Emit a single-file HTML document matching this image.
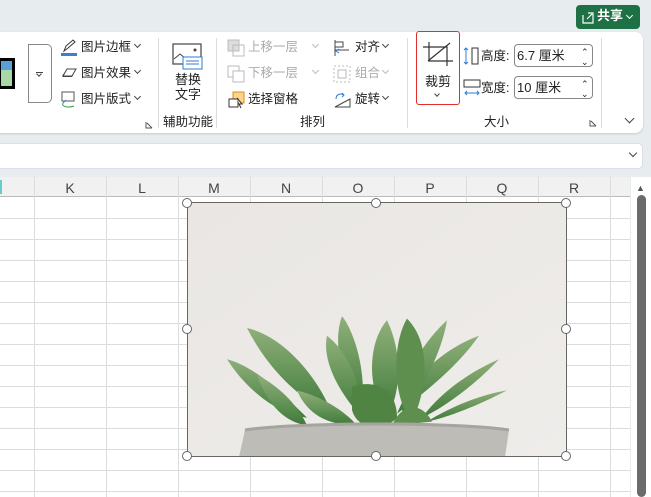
<!DOCTYPE html>
<html><head><meta charset="utf-8"><style>
*{margin:0;padding:0;box-sizing:border-box}
body{width:651px;height:497px;overflow:hidden;background:#e7ecef;font-family:"Liberation Sans","Noto Sans CJK SC",sans-serif;font-size:12.5px;color:#222;position:relative}
.a{position:absolute}
.t{position:absolute;white-space:nowrap;line-height:14px}
.g{color:#aaa}
.sep{position:absolute;width:1px;background:#dcdcdc;top:38px;height:90px}
.chev{position:absolute;width:5px;height:5px;border-right:1.2px solid #444;border-bottom:1.2px solid #444;transform:rotate(45deg)}
.chev.g2{border-color:#bbb}
.col{position:absolute;top:180px;font-size:14px;color:#444;width:20px;text-align:center;margin-left:-10px}
.h{position:absolute;width:10px;height:10px;border:1.6px solid #666;border-radius:50%;background:#fff;margin:-5px 0 0 -5px}
</style></head><body>
<div class="a" style="left:576px;top:5px;width:64px;height:24px;background:#1e7145;border-radius:4px"></div>
<svg class="a" style="left:581px;top:10px" width="14" height="14" viewBox="0 0 14 14"><path d="M2 5v8h10V8M6 9l5-5M7 3h5v5" stroke="#fff" fill="none" stroke-width="1.2"/></svg>
<div class="t" style="left:597px;top:9px;color:#fff;font-size:13px;font-weight:bold">共享</div>
<div class="chev" style="left:627px;top:13px;border-color:#fff"></div>

<div class="a" style="left:-10px;top:32px;width:653px;height:101px;background:#fff;border-radius:8px;box-shadow:0 1px 2px rgba(0,0,0,.15)"></div>
<div class="a" style="left:-2px;top:58px;width:17px;height:31px;border:3px solid #000;background:linear-gradient(#5aa0d8 0,#5aa0d8 35%,#a8d8a8 35%)"></div>
<div class="a" style="left:28px;top:44px;width:24px;height:59px;border:1px solid #888;border-radius:0 5px 5px 0"></div>
<div class="a" style="left:36px;top:72px;width:7px;height:1px;background:#444"></div><div class="chev" style="left:37px;top:72px;width:4px;height:4px"></div>

<svg class="a" style="left:60px;top:39px" width="18" height="18"><rect x="1" y="14" width="16" height="3" fill="#3d7dd8"/><path d="M4 12l2-5 7-6 2 2-7 6z" stroke="#333" fill="none"/></svg>
<div class="t" style="left:81px;top:40px">图片边框</div><div class="chev" style="left:135px;top:42px"></div>
<svg class="a" style="left:60px;top:66px" width="18" height="14"><path d="M2 10l5-7h9l-4 8H3z" fill="#444"/><path d="M7 3h9l-4 7H3z" fill="#fff" stroke="#444"/></svg>
<div class="t" style="left:81px;top:66px">图片效果</div><div class="chev" style="left:135px;top:68px"></div>
<svg class="a" style="left:60px;top:91px" width="18" height="18"><rect x="2" y="1" width="12" height="9" fill="none" stroke="#555"/><path d="M3 12c-2 4 6 5 11 3" stroke="#3a9a4a" fill="none"/><path d="M3 12l3-3" stroke="#3d7dd8"/></svg>
<div class="t" style="left:81px;top:92px">图片版式</div><div class="chev" style="left:135px;top:94px"></div>
<svg class="a" style="left:145px;top:121px" width="8" height="8"><path d="M1 1v6h6M2 2l5 5" stroke="#555" fill="none"/></svg>
<div class="sep" style="left:158px"></div>

<svg class="a" style="left:172px;top:43px" width="32" height="27"><rect x="1" y="1" width="28" height="20" fill="none" stroke="#444" stroke-width="1.2"/><path d="M2 16l6-5 5 4" stroke="#444" fill="none"/><circle cx="23" cy="7" r="1.5" fill="#444"/><rect x="11" y="14" width="19" height="12" fill="#fff" stroke="#2f7bd3"/><path d="M14 18h13M14 21h13" stroke="#2f7bd3"/></svg>
<div class="t" style="left:175px;top:73px;font-size:13px">替换</div>
<div class="t" style="left:175px;top:88px;font-size:13px">文字</div>
<div class="t" style="left:163px;top:115px">辅助功能</div>
<div class="sep" style="left:216px"></div>

<svg class="a" style="left:227px;top:39px" width="18" height="18"><rect x="1" y="1" width="11" height="11" fill="#ddd" stroke="#bbb"/><rect x="6" y="6" width="11" height="11" fill="none" stroke="#bbb"/></svg>
<div class="t g" style="left:248px;top:40px">上移一层</div><div class="chev g2" style="left:313px;top:42px"></div>
<svg class="a" style="left:227px;top:65px" width="18" height="18"><rect x="1" y="1" width="11" height="11" fill="none" stroke="#bbb"/><rect x="6" y="6" width="11" height="11" fill="#fff" stroke="#bbb"/></svg>
<div class="t g" style="left:248px;top:66px">下移一层</div><div class="chev g2" style="left:313px;top:68px"></div>
<svg class="a" style="left:228px;top:91px" width="18" height="18"><rect x="5" y="1" width="11" height="11" fill="#fbd38a" stroke="#e08a1a"/><rect x="1" y="8" width="9" height="8" fill="#fff" stroke="#333"/><path d="M9 7l5 6-3 0 2 4" fill="#fff" stroke="#333"/></svg>
<div class="t" style="left:248px;top:92px">选择窗格</div>
<div class="t" style="left:300px;top:115px">排列</div>

<svg class="a" style="left:333px;top:39px" width="18" height="18"><path d="M2 1v16M2 3h8v5H2M2 11h14" stroke="#444" fill="none"/><path d="M6 14l-3-2 3-2" stroke="#2f7bd3" fill="none"/></svg>
<div class="t" style="left:355px;top:40px">对齐</div><div class="chev" style="left:383px;top:42px"></div>
<svg class="a" style="left:333px;top:65px" width="18" height="18"><rect x="1" y="1" width="16" height="16" fill="none" stroke="#bbb" stroke-dasharray="2 2"/><rect x="5" y="5" width="8" height="8" fill="none" stroke="#bbb"/></svg>
<div class="t g" style="left:355px;top:66px">组合</div><div class="chev g2" style="left:383px;top:68px"></div>
<svg class="a" style="left:333px;top:91px" width="18" height="18"><path d="M2 16h15L17 8z" fill="none" stroke="#444"/><path d="M3 8c0-5 5-6 8-4M9 2l2 2-2 2" stroke="#2f7bd3" fill="none"/></svg>
<div class="t" style="left:355px;top:92px">旋转</div><div class="chev" style="left:383px;top:94px"></div>
<div class="sep" style="left:407px"></div>

<div class="a" style="left:416px;top:31px;width:44px;height:74px;border:1.6px solid #e0302e;border-radius:3px"></div>
<svg class="a" style="left:422px;top:41px" width="32" height="26"><path d="M1 6h24V25M7 1v19h24M6 20L28 2" stroke="#333" fill="none" stroke-width="1.2"/></svg>
<div class="t" style="left:425px;top:75px;font-size:13px">裁剪</div><div class="chev" style="left:435px;top:92px;width:4px;height:4px"></div>

<svg class="a" style="left:463px;top:46px" width="18" height="20"><path d="M3 2v16M1 4l2-2 2 2M1 16l2 2 2-2" stroke="#2f7bd3" fill="none"/><rect x="9" y="2" width="6" height="16" fill="none" stroke="#333"/></svg>
<div class="t" style="left:481px;top:49px">高度:</div>
<div class="a" style="left:514px;top:44px;width:79px;height:23px;border:1px solid #888;border-radius:4px"></div>
<div class="t" style="left:517px;top:49px;font-size:13px;color:#222">6.7 厘米</div>
<div class="t" style="left:581px;top:45px;font-size:9px">&#8963;</div><div class="t" style="left:581px;top:55px;font-size:9px">&#8964;</div>
<svg class="a" style="left:463px;top:78px" width="18" height="20"><rect x="1" y="2" width="16" height="7" fill="none" stroke="#333"/><path d="M2 15h14M4 13l-2 2 2 2M14 13l2 2-2 2" stroke="#2f7bd3" fill="none"/></svg>
<div class="t" style="left:481px;top:81px">宽度:</div>
<div class="a" style="left:514px;top:76px;width:79px;height:23px;border:1px solid #888;border-radius:4px"></div>
<div class="t" style="left:517px;top:81px;font-size:13px;color:#222">10 厘米</div>
<div class="t" style="left:581px;top:77px;font-size:9px">&#8963;</div><div class="t" style="left:581px;top:87px;font-size:9px">&#8964;</div>
<div class="t" style="left:484px;top:115px">大小</div>
<svg class="a" style="left:589px;top:119px" width="8" height="8"><path d="M1 1v6h6M2 2l5 5" stroke="#555" fill="none"/></svg>
<div class="sep" style="left:601px"></div>
<div class="chev" style="left:626px;top:115px;width:7px;height:7px"></div>

<div class="a" style="left:-5px;top:143px;width:648px;height:26px;background:#fff;border-radius:5px;border:1px solid #dde"></div>
<div class="chev" style="left:630px;top:150px;width:6px;height:6px"></div>

<div class="a" style="left:0;top:177px;width:630px;height:320px;background:#fff"></div>
<div class="a" style="left:0;top:177px;width:630px;height:20px;background:#f1f1f1;border-bottom:1px solid #bbb"></div>
<svg class="a" style="left:0;top:177px" width="630" height="320">
<g stroke="#dcdcdc" stroke-width="1">
<path d="M34.5 0V320M106.5 0V320M178.5 0V320M250.5 0V320M322.5 0V320M394.5 0V320M466.5 0V320M538.5 0V320M610.5 0V320"/>
<path d="M0 41.5H630M0 62.5H630M0 83.5H630M0 104.5H630M0 125.5H630M0 146.5H630M0 167.5H630M0 188.5H630M0 209.5H630M0 230.5H630M0 251.5H630M0 272.5H630M0 293.5H630M0 314.5H630"/>
</g></svg>
<div class="a" style="left:0;top:180px;width:2px;height:14px;background:#6cc"></div>
<div class="col" style="left:70px">K</div><div class="col" style="left:142px">L</div><div class="col" style="left:214px">M</div><div class="col" style="left:286px">N</div><div class="col" style="left:358px">O</div><div class="col" style="left:430px">P</div><div class="col" style="left:502px">Q</div><div class="col" style="left:574px">R</div>
<div class="a" style="left:631px;top:177px;width:20px;height:320px;background:#fff"></div>
<div class="t" style="left:636px;top:181px;font-size:9px;color:#555">▲</div>
<div class="a" style="left:637px;top:195px;width:9px;height:302px;background:#6b6b6b;border-radius:5px"></div>

<svg class="a" style="left:187px;top:202px" width="380" height="255" viewBox="0 0 380 255">
<defs><linearGradient id="bg" x1="0" y1="0" x2="1" y2="1"><stop offset="0" stop-color="#e9e6e3"/><stop offset="1" stop-color="#efedea"/></linearGradient>
<linearGradient id="lf" x1="0" y1="0" x2="0" y2="1"><stop offset="0" stop-color="#8fb07a"/><stop offset="1" stop-color="#3f7a3a"/></linearGradient></defs>
<rect width="380" height="255" fill="url(#bg)"/>
<g fill="url(#lf)" transform="translate(0,48) scale(1,0.78)">
<path d="M40 140C70 150 100 190 120 215 90 210 60 180 40 140z"/>
<path d="M60 100C95 110 130 160 145 210 110 190 80 150 60 100z"/>
<path d="M155 85C165 100 180 150 175 205 155 170 145 120 155 85z"/>
<path d="M140 110C160 130 175 170 175 215 150 180 135 140 140 110z"/>
<path d="M200 90C215 130 215 180 200 215 180 180 180 120 200 90z"/>
<path d="M292 110C270 150 240 180 210 210 225 160 260 125 292 110z"/>
<path d="M312 140C290 170 260 200 235 215 255 180 285 155 312 140z"/>
<path d="M320 180C290 200 260 215 240 220 265 200 295 185 320 180z"/>
<path d="M260 90C255 130 235 180 215 215 215 160 235 120 260 90z"/>
<path d="M110 180C140 190 160 210 170 225 140 225 120 210 110 180z"/>
<path d="M70 160C100 180 115 210 120 225 95 220 80 195 70 160z"/>
<path d="M220 88C245 120 240 180 225 220 205 190 205 120 220 88z" fill="#5e8f4f"/>
<path d="M165 175C190 165 210 180 210 215 195 235 170 230 165 205z" fill="#4f8442"/>
<path d="M205 225C215 195 235 195 245 220z" fill="#5e8f4f"/>
</g>
<path d="M58 228C110 218 270 218 322 228L318 255H52z" fill="#bdbcb7"/>
<path d="M58 228C110 220 270 220 322 228" stroke="#a5a49f" fill="none" stroke-width="3"/>
</svg>
<div class="a" style="left:187px;top:202px;width:380px;height:255px;border:1.4px solid #666"></div>
<div class="h" style="left:187px;top:203px"></div><div class="h" style="left:376px;top:203px"></div><div class="h" style="left:566px;top:203px"></div>
<div class="h" style="left:187px;top:329px"></div><div class="h" style="left:566px;top:329px"></div>
<div class="h" style="left:187px;top:456px"></div><div class="h" style="left:376px;top:456px"></div><div class="h" style="left:566px;top:456px"></div>
</body></html>
